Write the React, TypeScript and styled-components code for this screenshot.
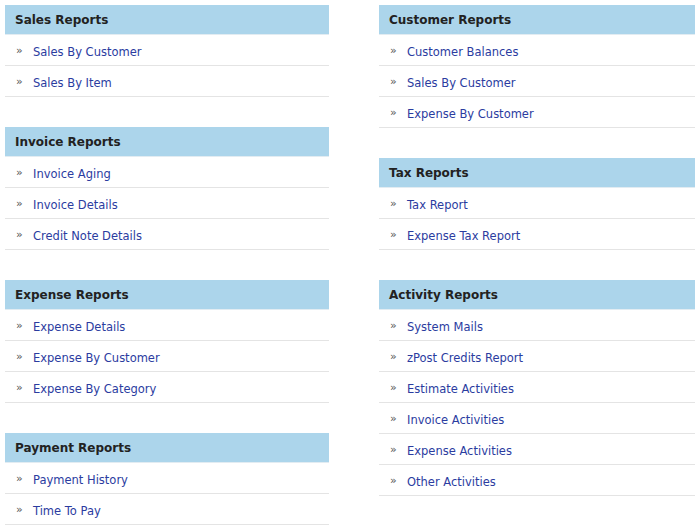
import React from "react";
import styled, { createGlobalStyle } from "styled-components";

const GlobalStyle = createGlobalStyle`
  body {
    margin: 0;
    background: #fff;
    font-family: "DejaVu Sans", Verdana, sans-serif;
  }
`;

type Section = { title: string; links: string[] };

const leftSections: Section[] = [
  { title: "Sales Reports", links: ["Sales By Customer", "Sales By Item"] },
  { title: "Invoice Reports", links: ["Invoice Aging", "Invoice Details", "Credit Note Details"] },
  { title: "Expense Reports", links: ["Expense Details", "Expense By Customer", "Expense By Category"] },
  { title: "Payment Reports", links: ["Payment History", "Time To Pay"] },
];

const rightSections: Section[] = [
  { title: "Customer Reports", links: ["Customer Balances", "Sales By Customer", "Expense By Customer"] },
  { title: "Tax Reports", links: ["Tax Report", "Expense Tax Report"] },
  {
    title: "Activity Reports",
    links: [
      "System Mails",
      "zPost Credits Report",
      "Estimate Activities",
      "Invoice Activities",
      "Expense Activities",
      "Other Activities",
    ],
  },
];

function ReportBlock({ section }: { section: Section }) {
  return (
    <Block>
      <BlockHeader>{section.title}</BlockHeader>
      {section.links.map((link) => (
        <Row key={link}>
          <Arrow>»</Arrow>
          <Link href="#">{link}</Link>
        </Row>
      ))}
    </Block>
  );
}

export default function App() {
  return (
    <Page>
      <GlobalStyle />
      <Column $width={324}>
        {leftSections.map((s) => (
          <ReportBlock key={s.title} section={s} />
        ))}
      </Column>
      <Column $width={316}>
        {rightSections.map((s) => (
          <ReportBlock key={s.title} section={s} />
        ))}
      </Column>
    </Page>
  );
}

const Page = styled.div`
  display: flex;
  align-items: flex-start;
  gap: 50px;
  padding: 5px;
`;

const Column = styled.div<{ $width: number }>`
  width: ${(p) => p.$width}px;
  display: flex;
  flex-direction: column;
`;

const Block = styled.div`
  margin-bottom: 30px;

  &:last-child {
    margin-bottom: 0;
  }
`;

const BlockHeader = styled.div`
  height: 29px;
  line-height: 30px;
  padding-left: 10px;
  background: #acd5eb;
  border-bottom: 1px solid #e2ecf2;
  color: #222;
  font-size: 12px;
  font-weight: bold;
`;

const Row = styled.div`
  box-sizing: border-box;
  height: 31px;
  display: flex;
  align-items: center;
  padding: 3px 0 0 11px;
  border-bottom: 1px solid #e4e4e4;
`;

const Arrow = styled.span`
  width: 17px;
  color: #555;
  font-size: 11px;
  position: relative;
  top: -1px;
`;

const Link = styled.a`
  color: #2b3c9f;
  font-size: 11.5px;
  text-decoration: none;
`;
